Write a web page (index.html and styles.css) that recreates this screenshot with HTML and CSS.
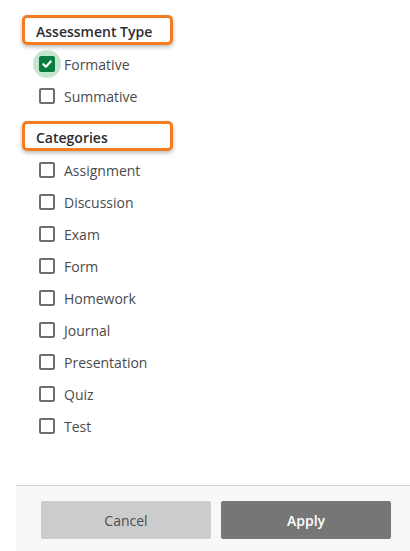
FILE: index.html
```html
<!DOCTYPE html>
<html>
<head>
<meta charset="utf-8">
<link rel="stylesheet" href="styles.css">
</head>
<body>
<div class="panel">
  <div class="content">
    <div class="heading first"><span>Assessment Type</span></div>
    <ul class="options">
      <li class="option"><span class="box checked focused"><svg viewBox="0 0 16 16" width="16" height="16"><path d="M4.3 8.2 L6.9 10.8 L11.7 5.4" fill="none" stroke="#fff" stroke-width="2.2" stroke-linecap="round" stroke-linejoin="round"/></svg></span><span class="label">Formative</span></li>
      <li class="option"><span class="box"></span><span class="label">Summative</span></li>
    </ul>
    <div class="heading"><span>Categories</span></div>
    <ul class="options">
      <li class="option"><span class="box"></span><span class="label">Assignment</span></li>
      <li class="option"><span class="box"></span><span class="label">Discussion</span></li>
      <li class="option"><span class="box"></span><span class="label">Exam</span></li>
      <li class="option"><span class="box"></span><span class="label">Form</span></li>
      <li class="option"><span class="box"></span><span class="label">Homework</span></li>
      <li class="option"><span class="box"></span><span class="label">Journal</span></li>
      <li class="option"><span class="box"></span><span class="label">Presentation</span></li>
      <li class="option"><span class="box"></span><span class="label">Quiz</span></li>
      <li class="option"><span class="box"></span><span class="label">Test</span></li>
    </ul>
  </div>
  <div class="footer">
    <button class="btn cancel">Cancel</button>
    <button class="btn apply">Apply</button>
  </div>
</div>
</body>
</html>
```
FILE: styles.css
```css
html, body {
  margin: 0;
  padding: 0;
  background: #ffffff;
}
body {
  font-family: "Open Sans", "Noto Sans", sans-serif;
  font-size: 14px;
  color: #262626;
}
.panel {
  height: 551px;
  display: flex;
  flex-direction: column;
}
.content {
  flex: 1;
  padding-top: 15px;
}
.heading {
  margin-left: 22px;
  width: 151px;
  height: 30px;
  box-sizing: border-box;
  border: 3px solid #f47b20;
  border-radius: 5px;
  box-shadow: 0 2px 4px rgba(0, 0, 0, 0.28);
  padding: 2px 0 0 11px;
  display: flex;
  align-items: center;
  font-weight: 600;
  color: #2d2d2d;
}
.options {
  list-style: none;
  margin: 3px 0 9px 0;
  padding: 0;
}
.option {
  position: relative;
  z-index: 0;
  height: 32px;
  display: flex;
  align-items: center;
  padding-left: 39px;
}
.box {
  position: relative;
  width: 16px;
  height: 16px;
  box-sizing: border-box;
  border: 2px solid #6f6f6f;
  border-radius: 2px;
  background: #fff;
  flex: none;
}
.box.checked {
  background: #0a7b3e;
  border-color: #0a7b3e;
}
.box.checked svg {
  position: absolute;
  left: -2px;
  top: -2px;
}
.box.focused::before {
  content: "";
  position: absolute;
  left: -8px;
  top: -8px;
  width: 28px;
  height: 28px;
  border-radius: 50%;
  background: #c6e5d1;
  z-index: -1;
}
.label {
  margin-left: 9px;
  color: #4b4b4b;
}
.footer {
  margin-left: 16px;
  height: 66px;
  box-sizing: border-box;
  border-top: 1px solid #d0d0d0;
  background: #f8f8f8;
  padding: 15px 0 0 25px;
  display: flex;
  gap: 10px;
  align-items: flex-start;
}
.btn {
  width: 170px;
  height: 38px;
  border: none;
  border-radius: 2px;
  font-family: "Open Sans", "Noto Sans", sans-serif;
  font-size: 14px;
}
.cancel {
  background: #cccccc;
  color: #4e4e4e;
}
.apply {
  background: #767676;
  color: #ffffff;
  font-weight: 600;
}
```
